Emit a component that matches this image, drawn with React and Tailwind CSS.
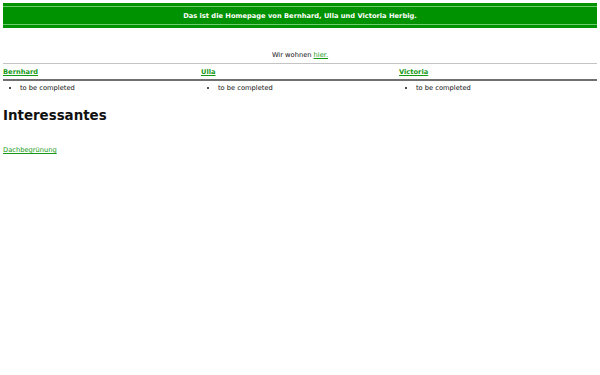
export default function App() {
  const people = ['Bernhard', 'Ulla', 'Victoria'];
  const link = 'text-[#169a16] underline';

  return (
    <div className="min-h-[375px] bg-white px-[3px] pt-[3px] text-[6.7px] leading-[8px] text-[#111] [font-family:'DejaVu_Sans',sans-serif]">
      <div className="flex h-[25px] flex-col bg-[#009200] py-[3px]">
        <div className="flex flex-1 items-center justify-center border-y border-[#6acc6a] font-bold text-white">
          Das ist die Homepage von Bernhard, Ulla und Victoria Herbig.
        </div>
      </div>

      <p className="mt-[23px] text-center">
        Wir wohnen <a className={link}>hier.</a>
      </p>

      <div className="mt-[4px] border-t border-[#c4c4c4]" />

      <div className="grid grid-cols-3">
        {people.map((p) => (
          <div key={p} className="pt-[4px] pb-[3px] font-bold">
            <a className={link}>{p}</a>
          </div>
        ))}
      </div>
      <div className="h-[2px] bg-[#6f6f6f]" />
      <div className="grid grid-cols-3">
        {people.map((p) => (
          <ul key={p} className="mt-[3px] list-disc pl-[17px]">
            <li>to be completed</li>
          </ul>
        ))}
      </div>

      <h1 className="mt-[16px] text-[13.4px] leading-[16px] font-bold">Interessantes</h1>

      <p className="mt-[22px]">
        <a className={link}>Dachbegrünung</a>
      </p>
    </div>
  );
}
